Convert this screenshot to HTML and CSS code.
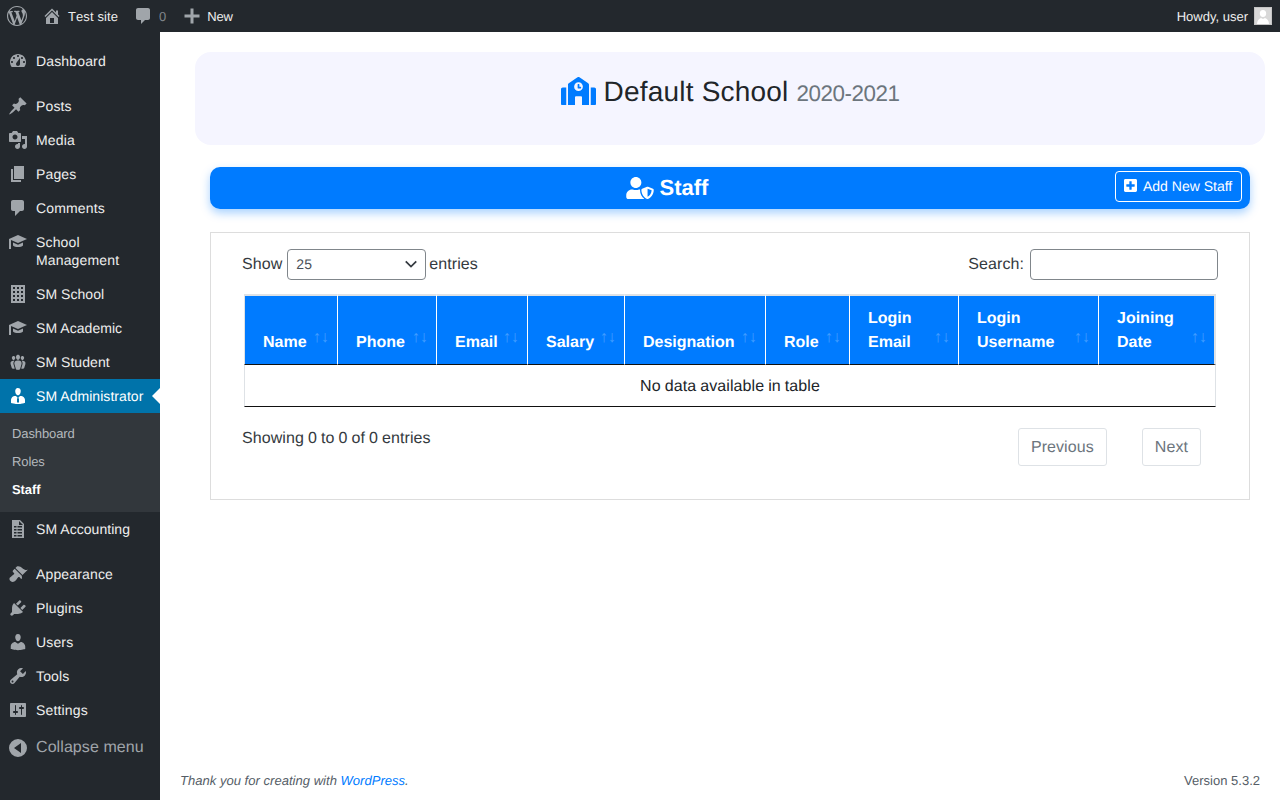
FILE: index.html
```html
<!DOCTYPE html>
<html lang="en">
<head>
<meta charset="utf-8">
<title>Staff</title>
<link rel="stylesheet" href="styles.css">
</head>
<body>
<header class="adminbar">
  <div class="ab-left">
    <svg class="ab-logo" viewBox="0 0 20 20"><path d="M20 10c0-5.510-4.490-10-10-10C4.480 0 0 4.490 0 10c0 5.520 4.480 10 10 10 5.510 0 10-4.480 10-10zM7.780 15.370L4.370 6.220c.55-.02 1.170-.08 1.170-.08.5-.06.44-1.130-.06-1.110 0 0-1.450.11-2.370.11-.18 0-.37 0-.58-.01C4.120 2.690 6.870 1.070 10 1.070c2.330 0 4.450.87 6.050 2.340-.68-.11-1.650.39-1.650 1.580 0 .74.45 1.360.9 2.100.35.61.55 1.360.55 2.460 0 1.490-1.400 5-1.400 5l-3.030-8.370c.54-.02.82-.17.82-.17.5-.05.44-1.250-.06-1.220 0 0-1.440.12-2.380.12-.87 0-2.330-.12-2.330-.12-.5-.03-.56 1.200-.06 1.220l.92.08 1.260 3.410zM17.410 10c.24-.64.74-1.870.43-4.250.7 1.290 1.050 2.710 1.050 4.250 0 3.290-1.730 6.240-4.400 7.780.97-2.590 1.940-5.200 2.920-7.780zM6.100 18.090C3.120 16.640 1.110 13.530 1.110 10c0-1.300.23-2.480.72-3.590C3.250 10.300 4.670 14.200 6.100 18.090zm4.030-6.630l2.580 6.980c-.86.29-1.760.45-2.710.45-.79 0-1.570-.11-2.290-.33.81-2.380 1.620-4.740 2.420-7.100z"/></svg>
    <span class="ab-item ab-home"><svg class="ab-ico" viewBox="0 0 20 20"><path fill-rule="evenodd" d="M16 8.500l1.530 1.530-1.060 1.060L10 4.620l-6.470 6.470-1.060-1.060L10 2.500l4 4v-2h2v4zM10 6.040l6 5.990V18H4v-5.970zM12 17v-5H8v5h4z"/></svg><span>Test site</span></span>
    <span class="ab-item ab-comments"><svg class="ab-ico" viewBox="0 0 20 20"><path d="M5 2h10c1.100 0 2 .9 2 2v8c0 1.100-.9 2-2 2h-3l-4 4v-4H5c-1.100 0-2-.9-2-2V4c0-1.100.9-2 2-2z"/></svg><span class="ab-count">0</span></span>
    <span class="ab-item ab-new"><svg class="ab-ico" viewBox="0 0 20 20"><path d="M17.500 8.500v3h-6v6h-3v-6h-6v-3h6v-6h3v6z"/></svg><span>New</span></span>
  </div>
  <div class="ab-right">
    <span>Howdy, user</span>
    <svg class="avatar" viewBox="0 0 18 18"><rect width="18" height="18" fill="#c5c5c5"/><rect x="1" y="1" width="16" height="16" fill="#d8d8d8"/><path fill="#fff" d="M9 3c2 0 3.200 1.500 3.200 3.500S11 10 9 10 5.800 8.500 5.800 6.500 7 3 9 3zM3 17c0-3.500 2-5.500 4-6l2 1 2-1c2 .5 4 2.500 4 6z"/></svg>
  </div>
</header>

<div class="shell">
  <nav class="sidebar">
    <ul class="menu">
      <li class="item"><svg class="ico" viewBox="0 0 20 20"><path fill-rule="evenodd" d="M3.760 16h12.480c1.100-1.370 1.760-3.110 1.760-5 0-4.420-3.580-8-8-8s-8 3.580-8 8c0 1.890.66 3.630 1.760 5zM10 4c.55 0 1 .45 1 1s-.45 1-1 1-1-.45-1-1 .45-1 1-1zM6 6c.55 0 1 .45 1 1s-.45 1-1 1-1-.45-1-1 .45-1 1-1zm8 0c.55 0 1 .45 1 1s-.45 1-1 1-1-.45-1-1 .45-1 1-1zm-5.370 5.550L12 7v6c0 1.100-.9 2-2 2s-2-.9-2-2c0-.57.24-1.080.63-1.450zM4 10c.55 0 1 .45 1 1s-.45 1-1 1-1-.45-1-1 .45-1 1-1zm12 0c.55 0 1 .45 1 1s-.45 1-1 1-1-.45-1-1 .45-1 1-1z"/></svg><span class="label">Dashboard</span></li>
      <li class="sep"></li>
      <li class="item"><svg class="ico" viewBox="0 0 20 20"><path d="M10.440 3.020l1.820-1.820 6.360 6.350-1.830 1.820c-1.050-.68-2.480-.57-3.410.36l-.75.75c-.92.93-1.040 2.350-.35 3.410l-1.830 1.820-2.410-2.410-2.800 2.790c-.42.42-3.380 2.710-3.800 2.290s1.860-3.390 2.280-3.810l2.790-2.790L4.100 9.360l1.830-1.820c1.050.69 2.480.57 3.400-.36l.75-.75c.93-.92 1.050-2.350.36-3.410z"/></svg><span class="label">Posts</span></li>
      <li class="item"><svg class="ico" viewBox="0 0 20 20"><path d="M13 11V4c0-.55-.45-1-1-1h-1.670L9 1H5L3.670 3H2c-.55 0-1 .45-1 1v7c0 .55.45 1 1 1h10c.55 0 1-.45 1-1zM7 4.500c1.380 0 2.500 1.120 2.500 2.500S8.380 9.500 7 9.500 4.500 8.380 4.500 7 5.620 4.500 7 4.500zM14 6h5v10.500c0 1.380-1.120 2.500-2.500 2.500S14 17.880 14 16.500s1.120-2.500 2.500-2.500c.17 0 .34.02.5.05V9h-3V6zm-4 8.050V13h2v3.500c0 1.380-1.120 2.500-2.500 2.500S7 17.880 7 16.500 8.120 14 9.500 14c.17 0 .34.02.5.05z"/></svg><span class="label">Media</span></li>
      <li class="item"><svg class="ico" viewBox="0 0 20 20"><path d="M6 15V2h10v13H6zm-1 1h8v2H3V5h2v11z"/></svg><span class="label">Pages</span></li>
      <li class="item"><svg class="ico" viewBox="0 0 20 20"><path d="M5 2h9c1.100 0 2 .9 2 2v7c0 1.100-.9 2-2 2h-2l-5 5v-5H5c-1.100 0-2-.9-2-2V4c0-1.100.9-2 2-2z"/></svg><span class="label">Comments</span></li>
      <li class="item"><svg class="ico" viewBox="0 0 20 20"><path d="M10 3l9 4-9 4-7-3v9H1V7zM5 10.500l5 2.300 5-2.300v3c-2 2-8 2-10 0z"/></svg><span class="label">School Management</span></li>
      <li class="item"><svg class="ico" viewBox="0 0 20 20"><path fill-rule="evenodd" d="M3 1h14v18H3zM5 3v2h2V3zm4 0v2h2V3zm4 0v2h2V3zM5 7v2h2V7zm4 0v2h2V7zm4 0v2h2V7zM5 11v2h2v-2zm4 0v2h2v-2zm4 0v2h2v-2zM5 15v2h2v-2zm4 0v2h2v-2zm4 0v2h2v-2z"/></svg><span class="label sm">SM School</span></li>
      <li class="item"><svg class="ico" viewBox="0 0 20 20"><path d="M10 3l9 4-9 4-7-3v9H1V7zM5 10.500l5 2.300 5-2.300v3c-2 2-8 2-10 0z"/></svg><span class="label sm">SM Academic</span></li>
      <li class="item"><svg class="ico" viewBox="0 0 20 20"><path d="M8.030 4.460c-.29 1.280.55 3.460 1.970 3.460 1.410 0 2.250-2.180 1.960-3.460-.22-.98-1.080-1.630-1.960-1.630-.89 0-1.740.65-1.970 1.630zm-4.130.9c-.25 1.080.47 2.930 1.670 2.930s1.920-1.850 1.670-2.930c-.19-.83-.92-1.390-1.670-1.390s-1.480.56-1.670 1.390zm8.860 0c-.25 1.080.47 2.930 1.660 2.930 1.200 0 1.920-1.850 1.670-2.930-.19-.83-.92-1.390-1.670-1.390-.74 0-1.470.56-1.660 1.390zm-.59 11.430l1.250-4.300C14.200 10 12.710 8.470 10 8.470c-2.720 0-4.210 1.530-3.440 4.020l1.260 4.300C8.050 17.510 9 18 10 18c.98 0 1.940-.49 2.170-1.210zm-6.100-7.630c-.49.67-.96 1.830-.42 3.590l1.120 3.790c-.34.2-.77.31-1.200.31-.85 0-1.650-.41-1.850-1.030l-1.070-3.650c-.65-2.110.61-3.400 2.920-3.400.27 0 .54.02.79.06-.1.1-.2.22-.29.33zm8.350-.39c2.310 0 3.580 1.290 2.920 3.400l-1.070 3.650c-.2.62-1 1.030-1.850 1.030-.43 0-.86-.11-1.200-.31l1.110-3.790c.55-1.760.08-2.920-.42-3.590-.08-.11-.18-.23-.28-.33.25-.04.51-.06.79-.06z"/></svg><span class="label sm">SM Student</span></li>
      <li class="item active"><svg class="ico" viewBox="0 0 20 20"><path d="M7.300 6l-.03-.19c-.04-.37-.05-.73-.03-1.080.02-.36.1-.71.25-1.040.14-.32.31-.61.52-.86s.49-.46.83-.6c.34-.15.72-.23 1.130-.23.69 0 1.260.2 1.710.59s.76.87.91 1.440.18 1.160.09 1.780l-.03.19c-.01.09-.05.25-.11.48-.05.24-.12.47-.2.69-.08.21-.19.45-.34.72-.14.27-.3.49-.47.69-.18.19-.4.34-.67.48-.27.13-.55.19-.86.19s-.59-.06-.87-.19c-.26-.13-.49-.29-.67-.5-.18-.2-.34-.42-.49-.66-.15-.25-.26-.49-.34-.73-.09-.25-.16-.47-.21-.67-.06-.21-.1-.37-.12-.5zm9.200 6.240c.41.7.5 1.410.5 2.140v2.490c0 .03-.12.08-.29.13-.18.04-.42.13-.97.27-.55.12-1.100.24-1.650.34s-1.190.19-1.950.27c-.75.08-1.460.12-2.130.12-.68 0-1.390-.04-2.140-.12-.75-.07-1.400-.17-1.980-.27-.58-.11-1.080-.23-1.560-.34-.49-.11-.8-.21-1.060-.29L3 16.870v-2.490c0-.75.07-1.460.46-2.150s.81-1.250 1.500-1.680C5.660 10.120 7.190 10 8 10l1.670 1.670L9 13v3l1.020 1.080L11 16v-3l-.68-1.330L11.970 10c.77 0 2.200.07 2.900.52.71.45 1.210 1.020 1.630 1.720z"/></svg><span class="label sm">SM Administrator</span></li>
      <li class="submenu">
        <a class="sub">Dashboard</a>
        <a class="sub">Roles</a>
        <a class="sub current">Staff</a>
      </li>
      <li class="item"><svg class="ico" viewBox="0 0 20 20"><path fill-rule="evenodd" d="M4 1h8l4 4v14H4zM11 2v4h4zM6 7v1.500h2.500V7zm3.500 0v1.500H14V7zM6 10v1.500h2.500V10zm3.500 0v1.500H14V10zM6 13v1.500h2.500V13zm3.500 0v1.500H14V13zM6 16v1.500h2.500V16zm3.500 0v1.500H14V16z"/></svg><span class="label sm">SM Accounting</span></li>
      <li class="sep"></li>
      <li class="item"><svg class="ico" viewBox="0 0 20 20"><path d="M14.480 11.060L7.410 3.990l1.500-1.500c.5-.56 2.300-.47 3.510.32 1.210.8 1.430 1.280 2.910 2.100 1.180.64 2.450 1.260 4.450.85zm-.71.71L6.700 4.700 4.930 6.470c-.39.39-.39 1.020 0 1.410l1.060 1.060c.39.39.39 1.030 0 1.420-.6.6-1.430 1.110-2.210 1.690-.35.26-.7.53-1.010.84C1.430 13.230.78 15.400 2.530 17s3.790.89 5.130-.45c.31-.31.58-.66.84-1.010.58-.78 1.090-1.610 1.690-2.210.39-.39 1.030-.39 1.420 0l1.060 1.060c.39.39 1.020.39 1.410 0z"/></svg><span class="label">Appearance</span></li>
      <li class="item"><svg class="ico" viewBox="0 0 20 20"><path d="M13.110 4.360L9.870 7.600 8 5.730l3.240-3.240c.35-.34 1.050-.2 1.560.32.52.51.66 1.210.31 1.550zm-8 1.770l.91-1.120 9.010 9.010-1.190.84c-.71.71-2.630 1.160-3.820 1.160H6.140L4.900 17.260c-.59.59-1.540.59-2.120 0-.59-.58-.59-1.530 0-2.120l1.240-1.240v-3.880c0-1.130.4-3.190 1.090-3.890zm7.260 3.970l3.240-3.240c.34-.35 1.040-.21 1.550.31.52.51.66 1.210.31 1.550l-3.240 3.250z"/></svg><span class="label">Plugins</span></li>
      <li class="item"><svg class="ico" viewBox="0 0 20 20"><path d="M10 9.250c-2.270 0-2.730-3.440-2.730-3.440C7 4.020 7.820 2 9.970 2c2.160 0 2.980 2.020 2.710 3.810 0 0-.41 3.440-2.680 3.440zm0 2.570L12.720 10c2.390 0 4.520 2.330 4.520 4.530v2.490s-3.650 1.130-7.240 1.130c-3.650 0-7.240-1.130-7.240-1.130v-2.490c0-2.250 1.940-4.480 4.470-4.480z"/></svg><span class="label">Users</span></li>
      <li class="item"><svg class="ico" viewBox="0 0 20 20"><path fill-rule="evenodd" d="M16.680 9.770c-1.340 1.340-3.300 1.670-4.950.99l-5.410 6.520c-.99.99-2.590.99-3.580 0s-.99-2.59 0-3.570l6.520-5.420c-.68-1.650-.35-3.610.99-4.950 1.280-1.280 3.120-1.620 4.720-1.060l-2.890 2.890 2.820 2.820 2.860-2.870c.53 1.580.18 3.390-1.080 4.650zM3.810 16.210c.4.39 1.040.39 1.430 0 .4-.4.4-1.040 0-1.430-.39-.4-1.030-.4-1.430 0-.39.39-.39 1.030 0 1.430z"/></svg><span class="label">Tools</span></li>
      <li class="item"><svg class="ico" viewBox="0 0 20 20"><path fill-rule="evenodd" d="M18 16V4c0-.55-.45-1-1-1H3c-.55 0-1 .45-1 1v12c0 .55.45 1 1 1h14c.55 0 1-.45 1-1zM8 11h1c.55 0 1 .45 1 1s-.45 1-1 1H8v1.500c0 .28-.22.5-.5.5s-.5-.22-.5-.5V13H6c-.55 0-1-.45-1-1s.45-1 1-1h1V5.500c0-.28.22-.5.5-.5s.5.22.5.5V11zm5-2h-1c-.55 0-1-.45-1-1s.45-1 1-1h1V5.500c0-.28.22-.5.5-.5s.5.22.5.5V7h1c.55 0 1 .45 1 1s-.45 1-1 1h-1v5.500c0 .28-.22.5-.5.5s-.5-.22-.5-.5V9z"/></svg><span class="label">Settings</span></li>
      <li class="collapse"><svg class="ico" viewBox="0 0 20 20"><path fill-rule="evenodd" d="M10 1a9 9 0 1 1 0 18 9 9 0 0 1 0-18zM13 5L6 10l7 5z"/></svg><span class="label">Collapse menu</span></li>
    </ul>
  </nav>

  <main class="content">
    <div class="school">
      <svg class="school-ico" viewBox="0 0 640 512"><path d="M0 224v272c0 8.840 7.160 16 16 16h80V192H32c-17.670 0-32 14.330-32 32zm360-48h-24v-40c0-4.420-3.580-8-8-8h-16c-4.420 0-8 3.580-8 8v64c0 4.420 3.580 8 8 8h48c4.420 0 8-3.580 8-8v-16c0-4.420-3.580-8-8-8zm137.750-63.960l-160-106.670a32.020 32.020 0 0 0-35.500 0l-160 106.670A32.002 32.002 0 0 0 128 138.660V512h128V368c0-8.840 7.160-16 16-16h96c8.840 0 16 7.160 16 16v144h128V138.670c0-10.700-5.350-20.690-14.250-26.630zM320 256c-44.180 0-80-35.820-80-80s35.820-80 80-80 80 35.820 80 80-35.820 80-80 80zm288-64h-64v320h80c8.840 0 16-7.160 16-16V224c0-17.670-14.330-32-32-32z"/></svg>
      <h1 class="school-name">Default School <small class="session">2020-2021</small></h1>
    </div>

    <section class="staff">
      <div class="staff-bar">
        <h2 class="staff-title"><svg class="staff-ico" viewBox="0 0 640 512"><path d="M622.300 271.100l-115.200-45c-4.100-1.600-12.600-3.700-22.200 0l-115.200 45c-10.700 4.200-17.700 14-17.700 24.900 0 111.600 68.700 188.800 132.900 213.900 9.600 3.700 18 1.600 22.200 0C558.400 489.900 640 420.500 640 296c0-10.900-7-20.700-17.700-24.900zM496 462.400V273.300l95.500 37.300c-5.600 87.100-60.900 135.400-95.500 151.800zM224 256c70.700 0 128-57.300 128-128S294.700 0 224 0 96 57.300 96 128s57.300 128 128 128zm96 40c0-2.500.8-4.800 1.100-7.200-2.500-.1-4.900-.8-7.500-.8h-16.700c-22.200 10.200-46.900 16-72.900 16s-50.600-5.800-72.900-16h-16.700C60.200 288 0 348.200 0 422.400V464c0 26.500 21.500 48 48 48h352c6.800 0 13.300-1.500 19.100-4-54-42.900-99.100-116.700-99.100-212z"/></svg>Staff</h2>
        <button class="add-btn" type="button"><svg class="add-ico" viewBox="0 0 448 512"><path d="M400 32H48C21.500 32 0 53.500 0 80v352c0 26.500 21.500 48 48 48h352c26.500 0 48-21.500 48-48V80c0-26.500-21.500-48-48-48zm-32 252c0 6.600-5.400 12-12 12h-92v92c0 6.600-5.400 12-12 12h-56c-6.600 0-12-5.400-12-12v-92H92c-6.600 0-12-5.400-12-12v-56c0-6.600 5.400-12 12-12h92v-92c0-6.600 5.400-12 12-12h56c6.600 0 12 5.400 12 12v92h92c6.600 0 12 5.400 12 12v56z"/></svg>Add New Staff</button>
      </div>

      <div class="card">
        <div class="controls">
          <div class="length">Show <span class="select"><span>25</span><svg class="chev" viewBox="0 0 16 16"><path d="M2 5l6 6 6-6" fill="none" stroke="#343a40" stroke-width="2"/></svg></span> entries</div>
          <div class="search">Search: <span class="search-input"></span></div>
        </div>
        <table class="grid">
          <colgroup>
            <col class="c1"><col class="c2"><col class="c3"><col class="c4"><col class="c5"><col class="c6"><col class="c7"><col class="c8"><col class="c9">
          </colgroup>
          <thead>
            <tr>
              <th>Name</th><th>Phone</th><th>Email</th><th>Salary</th><th>Designation</th><th>Role</th><th>Login Email</th><th>Login Username</th><th>Joining Date</th>
            </tr>
          </thead>
          <tbody>
            <tr><td colspan="9">No data available in table</td></tr>
          </tbody>
        </table>
        <div class="table-foot">
          <div class="info">Showing 0 to 0 of 0 entries</div>
          <div class="pager"><span class="page-btn">Previous</span><span class="page-btn">Next</span></div>
        </div>
      </div>
    </section>

    <footer class="foot">
      <span class="thanks">Thank you for creating with <a class="wp-link">WordPress</a>.</span>
      <span class="version">Version 5.3.2</span>
    </footer>
  </main>
</div>
</body>
</html>
```
FILE: styles.css
```css
* { box-sizing: border-box; }
html, body { margin: 0; padding: 0; height: 100%; }
body {
  font-family: "Liberation Sans", Arial, sans-serif;
  background: #fff;
  color: #212529;
  overflow: hidden;
  text-rendering: geometricPrecision;
}

/* Admin bar */
.adminbar {
  height: 32px;
  background: #23282d;
  color: #eee;
  font-size: 13px;
  display: flex;
  align-items: center;
  justify-content: space-between;
}
.ab-left, .ab-right, .ab-item { display: flex; align-items: center; }
.ab-left { padding-left: 7px; }
.ab-logo { width: 20px; height: 20px; fill: #a0a5aa; }
.ab-ico { width: 20px; height: 20px; fill: #a0a5aa; flex: none; }
.ab-home { margin-left: 15px; gap: 6px; font-kerning: none; letter-spacing: .1px; }
.ab-comments { margin-left: 15px; gap: 6px; }
.ab-count { color: #a0a5aa; opacity: .75; }
.ab-new { margin-left: 16px; gap: 5px; letter-spacing: -.2px; }
.ab-right { padding-right: 8px; gap: 6px; }
.avatar { width: 18px; height: 18px; display: block; }

/* Shell */
.shell { display: flex; height: 768px; }

/* Sidebar */
.sidebar { width: 160px; flex: none; background: #23282d; }
.menu { list-style: none; margin: 0; padding: 12px 0 0; }
.item {
  position: relative;
  display: flex;
  align-items: flex-start;
  padding: 8px 12px 8px 0;
  font-size: 14px;
  line-height: 18px;
  letter-spacing: .15px;
  color: #eee;
}
.sm { letter-spacing: .05px; }
.ico { width: 20px; height: 20px; flex: none; margin: -1px 8px -1px 8px; fill: #a0a5aa; }
.sep { height: 11px; }
.active { background: #0073aa; color: #fff; }
.active .ico { fill: #fff; }
.active::after {
  content: "";
  position: absolute;
  right: 0;
  top: 9px;
  border: 8px solid transparent;
  border-left-width: 0;
  border-right-color: #fff;
}
.submenu { background: #32373c; padding: 7px 0 8px; font-size: 13px; letter-spacing: -.1px; }
.sub { display: block; height: 28px; line-height: 28px; padding-left: 12px; color: #b4b9be; }
.current { color: #fff; font-weight: 700; }
.collapse {
  display: flex;
  align-items: center;
  height: 38px;
  padding-top: 3px;
  font-size: 16px;
  letter-spacing: .08px;
  color: #a0a5aa;
}

/* Content */
.content {
  flex: 1;
  min-width: 0;
  display: flex;
  flex-direction: column;
  padding: 20px 15px 0 35px;
}
.school {
  height: 93px;
  background: #f5f5ff;
  border-radius: 16px;
  display: flex;
  justify-content: center;
  align-items: flex-start;
  padding-top: 23px;
  gap: 8px;
}
.school-ico { width: 35px; height: 28px; fill: #007bff; margin-top: 2px; }
.school-name { margin: 0; font-size: 28px; font-weight: 400; line-height: 34px; letter-spacing: .2px; color: #212529; }
.session { font-size: 22.4px; letter-spacing: -.45px; color: #6c757d; }

.staff { margin: 22px 15px 0; }
.staff-bar {
  height: 42px;
  background: #007bff;
  border-radius: 10px;
  box-shadow: 0 4px 10px rgba(0, 123, 255, .35);
  display: flex;
  align-items: flex-start;
  padding: 0 8px 0 9px;
  color: #fff;
}
.staff-title {
  flex: 1;
  height: 42px;
  margin: 0;
  font-size: 22px;
  font-weight: 700;
  display: flex;
  justify-content: center;
  align-items: center;
  gap: 6px;
}
.staff-ico { width: 28px; height: 22px; fill: #fff; }
.add-btn {
  height: 31px;
  width: 127px;
  margin-top: 4px;
  padding: 0 8px 2px;
  display: flex;
  align-items: center;
  gap: 6px;
  background: transparent;
  border: 1px solid #fff;
  border-radius: 4px;
  color: #fff;
  font: 14px "Liberation Sans", Arial, sans-serif;
  text-rendering: geometricPrecision;
}
.add-ico { width: 13px; height: 15px; fill: #fff; flex: none; }

/* Card */
.card {
  margin-top: 23px;
  height: 268px;
  border: 1px solid #ddd;
  padding: 16px 31px 0;
  font-size: 16px;
  color: #343a40;
}
.controls { display: flex; justify-content: space-between; align-items: flex-start; height: 45px; }
.length, .search { display: flex; align-items: center; height: 31px; letter-spacing: .08px; word-spacing: -.5px; }
.select {
  display: flex;
  align-items: center;
  justify-content: space-between;
  width: 139px;
  height: 31px;
  margin: 0 3px 0 5px;
  padding: 0 7px 2px 8px;
  border: 1px solid #80868b;
  border-radius: 4px;
  font-size: 14px;
  color: #495057;
}
.chev { width: 14px; height: 14px; }
.search-input {
  display: block;
  width: 188px;
  height: 31px;
  margin-left: 6px;
  border: 1px solid #80868b;
  border-radius: 4px;
}

/* Table */
.grid {
  width: 972px;
  margin-left: 2px;
  table-layout: fixed;
  border-collapse: separate;
  border-spacing: 0;
}
.c1 { width: 94px; }
.c2 { width: 99px; }
.c3 { width: 91px; }
.c4 { width: 97px; }
.c5 { width: 141px; }
.c6 { width: 84px; }
.c7 { width: 109px; }
.c8 { width: 140px; }
.c9 { width: 117px; }
.grid th {
  position: relative;
  height: 71px;
  padding: 11px 30px 9px 18px;
  background: #007bff;
  border-top: 2px solid #dee2e6;
  border-right: 1px solid #fff;
  border-bottom: 1px solid #111;
  color: #fff;
  font-size: 16px;
  font-weight: 700;
  line-height: 24px;
  text-align: left;
  vertical-align: bottom;
}
.grid th:first-child { border-left: 1px solid #dee2e6; }
.grid th:last-child { border-right: 2px solid #dee2e6; }
.grid th::before,
.grid th::after {
  position: absolute;
  bottom: 14px;
  opacity: .25;
  line-height: 24px;
  font-weight: 400;
}
.grid th::before { content: "\2191"; right: 16px; }
.grid th::after { content: "\2193"; right: 8px; }
.grid th:last-child::before { right: 15px; }
.grid th:last-child::after { right: 7px; }
.grid td {
  height: 42px;
  padding: 2px 0 0;
  text-align: center;
  color: #212529;
  letter-spacing: .08px;
  word-spacing: -.5px;
  border-left: 1px solid #dee2e6;
  border-right: 1px solid #dee2e6;
  border-bottom: 1px solid #111;
}
.table-foot { display: flex; justify-content: space-between; align-items: flex-start; margin-top: 21px; letter-spacing: .08px; word-spacing: -.5px; }
.info { line-height: 20px; padding-top: 1px; }
.pager { display: flex; gap: 35px; margin-right: 17px; }
.page-btn {
  display: block;
  height: 38px;
  padding: 7px 12px 5px;
  line-height: 24px;
  border: 1px solid #dee2e6;
  border-radius: 3px;
  color: #6c757d;
}

/* Footer */
.foot {
  margin: auto 5px 0 -15px;
  height: 27px;
  display: flex;
  justify-content: space-between;
  font-size: 13px;
  color: #555d66;
}
.thanks { font-style: italic; font-kerning: none; letter-spacing: .03px; }
.wp-link { color: #007bff; }
```
